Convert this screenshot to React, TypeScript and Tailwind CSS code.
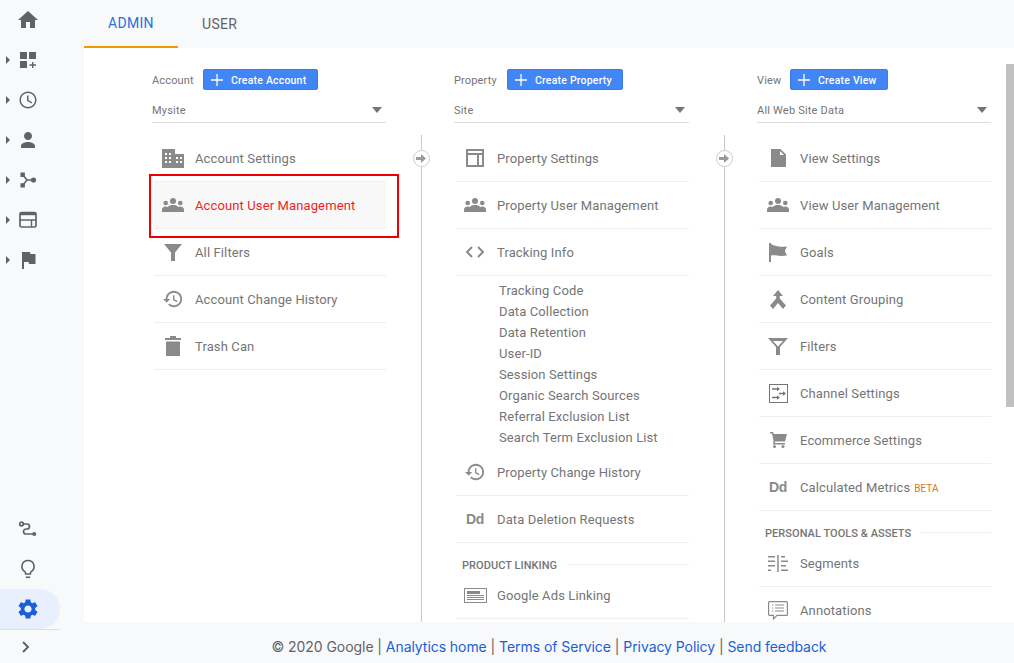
import type { ReactNode } from "react";

type Row = { label: string; icon: ReactNode; beta?: boolean; active?: boolean };

const Home = () => (
  <svg width="24" height="24" viewBox="0 0 24 24" fill="#5f6368"><path d="M10 20v-6h4v6h5v-8h3L12 3 2 12h3v8z" /></svg>
);
const Customization = () => (
  <svg width="24" height="24" viewBox="0 0 24 24" fill="#5f6368">
    <path d="M4 4h7v7H4zM13 4h7v7h-7zM4 13h7v7H4zM16 14h1.400v2.300H20v1.400h-2.600V20H16v-2.300h-2.500v-1.400H16z" />
  </svg>
);
const Clock = () => (
  <svg width="24" height="24" viewBox="0 0 24 24" fill="#5f6368">
    <path d="M11.990 3.500C7.300 3.500 3.500 7.300 3.500 12s3.800 8.500 8.490 8.500c4.700 0 8.510-3.800 8.510-8.500s-3.810-8.500-8.510-8.500zM12 19c-3.870 0-7-3.130-7-7s3.130-7 7-7 7 3.130 7 7-3.130 7-7 7z" />
    <path d="M12.500 7.500H11v5.300l4.600 2.800.75-1.200-3.850-2.300z" />
  </svg>
);
const Person = () => (
  <svg width="24" height="24" viewBox="0 0 24 24" fill="#5f6368">
    <path d="M12 12c2.210 0 4-1.790 4-4s-1.790-4-4-4-4 1.790-4 4 1.790 4 4 4zm0 2c-2.670 0-7 1.340-7 4v2h14v-2c0-2.660-4.330-4-7-4z" />
  </svg>
);
const Acquisition = () => (
  <svg width="24" height="24" viewBox="0 0 24 24" fill="#5f6368">
    <path d="M4.500 4.500h4.400v4.400H4.500zM4.500 15.200h4.400v4.400H4.500z" />
    <circle cx="17.500" cy="12" r="2.600" />
    <path d="M7 7l4 5-4 5M11 12h6" fill="none" stroke="#5f6368" strokeWidth="1.600" />
  </svg>
);
const Behavior = () => (
  <svg width="24" height="24" viewBox="0 0 24 24" fill="none" stroke="#5f6368">
    <rect x="4" y="4.500" width="16" height="14.500" rx="1.500" strokeWidth="1.700" />
    <path d="M4 6h16" strokeWidth="2.400" />
    <path d="M4 12h16M15.500 12v7" strokeWidth="1.400" />
  </svg>
);
const Flag = () => (
  <svg width="24" height="24" viewBox="0 0 24 24" fill="#5f6368"><path d="M14.400 6L14 4H6v17h2v-7h4.600l.4 2h6.500V6z" /></svg>
);
const RouteIcon = () => (
  <svg width="24" height="24" viewBox="0 0 24 24" fill="none" stroke="#5f6368" strokeWidth="1.700">
    <circle cx="5.500" cy="7" r="1.800" />
    <path d="M7.500 7H11a2.500 2.500 0 0 1 0 5h-1a2.500 2.500 0 0 0 0 5h7" />
    <circle cx="18.200" cy="17" r="2" fill="#5f6368" stroke="none" />
  </svg>
);
const Bulb = () => (
  <svg width="24" height="24" viewBox="0 0 24 24" fill="none" stroke="#5f6368" strokeWidth="1.600">
    <path d="M12 3.500a6 6 0 0 0-3.200 11.100c.6.400.8 1 .8 1.700v.7h4.800v-.7c0-.7.200-1.300.8-1.700A6 6 0 0 0 12 3.500z" />
    <path d="M9.800 20.300h4.400" />
  </svg>
);
const Gear = () => (
  <svg width="24" height="24" viewBox="0 0 24 24" fill="#1a5fd9">
    <path d="M19.140 12.940c.04-.3.06-.61.06-.94 0-.32-.02-.64-.07-.94l2.030-1.580c.18-.14.23-.41.12-.61l-1.920-3.320c-.12-.22-.37-.29-.59-.22l-2.390.96c-.5-.38-1.030-.7-1.620-.94l-.36-2.540c-.04-.24-.24-.41-.48-.41h-3.840c-.24 0-.43.17-.47.41l-.36 2.540c-.59.24-1.130.57-1.620.94l-2.390-.96c-.22-.08-.47 0-.59.22L2.740 8.870c-.12.21-.08.47.12.61l2.030 1.580c-.05.3-.09.63-.09.94s.02.64.07.94l-2.030 1.580c-.18.14-.23.41-.12.61l1.920 3.320c.12.22.37.29.59.22l2.390-.96c.5.38 1.030.7 1.620.94l.36 2.540c.05.24.24.41.48.41h3.840c.24 0 .44-.17.47-.41l.36-2.540c.59-.24 1.130-.56 1.620-.94l2.390.96c.22.08.47 0 .59-.22l1.920-3.320c.12-.22.07-.47-.12-.61l-2.010-1.580zM12 15.600c-1.980 0-3.600-1.620-3.600-3.600s1.620-3.600 3.600-3.600 3.600 1.620 3.600 3.600-1.620 3.600-3.600 3.600z" />
  </svg>
);

const Building = () => (
  <svg width="22" height="19" viewBox="0 0 22 19">
    <path fill="#8a8a8a" fillRule="evenodd" d="M0 0h13v5h9v14H0zM3 4v2h2V4zm4 0v2h2V4zM3 8v2h2V8zm4 0v2h2V8zm7 0v2h2V8zm4 0v2h2V8zM3 12v2h2v-2zm4 0v2h2v-2zm7 0v2h2v-2zm4 0v2h2v-2z" />
  </svg>
);
const People = () => (
  <svg width="22" height="14" viewBox="0 0 22 14" fill="#8a8a8a">
    <circle cx="11" cy="3" r="3" />
    <circle cx="3.700" cy="5" r="2.300" />
    <circle cx="18.300" cy="5" r="2.300" />
    <path d="M0 14v-2.500c0-1.700 2-3 3.700-3 .8 0 1.500.2 2.100.5C7 7.500 9 7 11 7s4 .5 5.200 2c.6-.3 1.300-.5 2.100-.5 1.700 0 3.700 1.300 3.700 3V14z" />
  </svg>
);
const Funnel = () => (
  <svg width="18" height="17" viewBox="0 0 18 17" fill="#8a8a8a"><path d="M0 0h18l-7 8.500V17H7V8.500z" /></svg>
);
const FunnelOutline = () => (
  <svg width="20" height="17" viewBox="0 0 20 17" fill="#8a8a8a">
    <path fillRule="evenodd" d="M0 0h20l-8 9v8H8V9zM5 3l5 5.500L15 3z" />
  </svg>
);
const History = () => (
  <svg width="20" height="20" viewBox="1 2 22 20" fill="#8a8a8a">
    <path d="M13 3c-4.970 0-9 4.030-9 9H1l3.890 3.890.07.14L9 12H6c0-3.870 3.130-7 7-7s7 3.130 7 7-3.130 7-7 7c-1.930 0-3.680-.79-4.940-2.060l-1.420 1.420C8.270 19.990 10.510 21 13 21c4.970 0 9-4.030 9-9s-4.030-9-9-9zm-1 5v5l4.280 2.540.72-1.210-3.500-2.080V8H12z" />
  </svg>
);
const Trash = () => (
  <svg width="16" height="20" viewBox="0 0 16 20" fill="#8a8a8a"><path d="M0 2h5V0h6v2h5v2H0zM1 5.500h14V20H1z" /></svg>
);
const Dd = () => (
  <span className="font-['Liberation_Sans',sans-serif] text-[14px] leading-none font-bold tracking-[-0.3px] text-[#8a8a8a]">Dd</span>
);
const Layout = () => (
  <svg width="18" height="18" viewBox="0 0 18 18" fill="none" stroke="#8a8a8a" strokeWidth="2">
    <path d="M1 1h16v16H1zM1 5h16M12 5v12" />
  </svg>
);
const Code = () => (
  <svg width="20" height="12" viewBox="0 0 20 12" fill="none" stroke="#8a8a8a" strokeWidth="2">
    <path d="M7 1L2 6l5 5M13 1l5 5-5 5" />
  </svg>
);
const AdsCard = () => (
  <svg width="23" height="15" viewBox="0 0 23 15" fill="none">
    <rect x=".5" y=".5" width="22" height="14" stroke="#8a8a8a" />
    <path d="M3 3h13v3H3z" fill="#8a8a8a" />
    <path d="M3 7.500h17M3 9.500h17M3 11.500h17" stroke="#8a8a8a" />
  </svg>
);
const Doc = () => (
  <svg width="15" height="18" viewBox="0 0 15 18" fill="#8a8a8a"><path d="M0 0h9.500L15 5.500V18H0zM9 2v4h4z" fillRule="evenodd" /></svg>
);
const GoalFlag = () => (
  <svg width="18" height="19" viewBox="0 0 18 19" fill="#8a8a8a">
    <path d="M0 0h2v19H0zM2 1c3 2 6 2 8 2.500 2 .5 5 .3 8 0-1 2-2 3.500-2 4.500s1 2.500 2 4.500c-4 .5-8 .5-10 0-2-.5-4-.5-6 0z" />
  </svg>
);
const Merge = () => (
  <svg width="16" height="19" viewBox="0 0 16 19" fill="#8a8a8a">
    <path d="M8 0l5 6H9.800v2.500L16 15.500 13 19 8 13 3 19 0 15.500 6.200 8.500V6H3z" />
  </svg>
);
const ChannelBox = () => (
  <svg width="19" height="19" viewBox="0 0 19 19" fill="none" stroke="#757575">
    <rect x=".5" y=".5" width="18" height="18" />
    <path d="M3 5h6M10 9.500h6M3 13.500h6" strokeWidth="1.400" />
    <path d="M8 2.800L11 5 8 7.200zM14 7.300l3 2.200-3 2.200zM8 11.300l3 2.200-3 2.200z" fill="#757575" stroke="none" />
  </svg>
);
const Cart = () => (
  <svg width="17" height="16" viewBox="0 0 17 16" fill="#8a8a8a">
    <path d="M0 0h3l.8 2H17l-2 7.500H5.200L4.800 11H15v1.500H3L3.600 9 2 1.500H0z" />
    <circle cx="4.500" cy="14.500" r="1.500" />
    <circle cx="13" cy="14.500" r="1.500" />
  </svg>
);
const SegmentsIcon = () => (
  <svg width="20" height="17" viewBox="0 0 20 17" fill="none" stroke="#8a8a8a" strokeWidth="1.500">
    <path d="M10 0v17M0 1.800h7M0 6.300h7M0 10.800h7M0 15.300h3M13 1.800h4M13 6.300h7M13 10.800h5M13 15.300h7" />
  </svg>
);
const Comment = () => (
  <svg width="20" height="19" viewBox="0 0 20 19" fill="none" stroke="#8a8a8a" strokeWidth="1.200">
    <path d="M1.500.6h17a.9.9 0 0 1 .9.9v12a.9.9 0 0 1-.9.9H9L5.500 18v-3.600h-4a.9.9 0 0 1-.9-.9v-12a.9.9 0 0 1 .9-.9z" />
    <path d="M4 4h1.300M7 4h9M4 7h1.300M7 7h9M4 10h1.300M7 10h9" />
  </svg>
);

const accountRows: Row[] = [
  { label: "Account Settings", icon: <Building /> },
  { label: "Account User Management", icon: <People />, active: true },
  { label: "All Filters", icon: <Funnel /> },
  { label: "Account Change History", icon: <History /> },
  { label: "Trash Can", icon: <Trash /> },
];

const propertyTop: Row[] = [
  { label: "Property Settings", icon: <Layout /> },
  { label: "Property User Management", icon: <People /> },
  { label: "Tracking Info", icon: <Code /> },
];

const trackingLinks = [
  "Tracking Code",
  "Data Collection",
  "Data Retention",
  "User-ID",
  "Session Settings",
  "Organic Search Sources",
  "Referral Exclusion List",
  "Search Term Exclusion List",
];

const propertyMiddle: Row[] = [
  { label: "Property Change History", icon: <History /> },
  { label: "Data Deletion Requests", icon: <Dd /> },
];

const viewTop: Row[] = [
  { label: "View Settings", icon: <Doc /> },
  { label: "View User Management", icon: <People /> },
  { label: "Goals", icon: <GoalFlag /> },
  { label: "Content Grouping", icon: <Merge /> },
  { label: "Filters", icon: <FunnelOutline /> },
  { label: "Channel Settings", icon: <ChannelBox /> },
  { label: "Ecommerce Settings", icon: <Cart /> },
  { label: "Calculated Metrics", icon: <Dd />, beta: true },
];

const viewBottom: Row[] = [
  { label: "Segments", icon: <SegmentsIcon /> },
  { label: "Annotations", icon: <Comment /> },
];

function ListRow({ row }: { row: Row }) {
  return (
    <div
      className={`relative flex h-[47px] shrink-0 items-center border-b border-[#eeeeee] text-[13px] tracking-[0.12px] ${
        row.active ? "bg-[#f8f8f8] text-[#f01f1f]" : "text-[#757575]"
      }`}
    >
      <span className="flex w-[38px] shrink-0 justify-center">{row.icon}</span>
      <span className="ml-[3px] pt-[2px]">{row.label}</span>
      {row.beta && <span className="ml-1 pt-[2px] text-[10px] tracking-normal text-[#e8711a]">BETA</span>}
      {row.active && (
        <span className="absolute top-[-8px] right-[-13px] bottom-[-10px] left-[-5px] border-2 border-[#ee0000]" />
      )}
    </div>
  );
}

function Section({ title }: { title: string }) {
  return (
    <div className="flex h-[29px] shrink-0 items-start pt-[17px] pl-[6px]">
      <span className="text-[11px] leading-3 font-medium tracking-[0.05px] whitespace-nowrap text-[#757575]">{title}</span>
      <span className="mt-[4px] ml-[10px] h-px flex-1 bg-[#eeeeee]" />
    </div>
  );
}

function ColumnHead({
  label,
  labelWidth,
  button,
  value,
}: {
  label: string;
  labelWidth: string;
  button: string;
  value: string;
}) {
  return (
    <div className="shrink-0">
      <div className="flex h-[21px] items-center">
        <span className={`${labelWidth} pt-[4px] text-[11px] tracking-[0.15px] text-[#757575]`}>{label}</span>
        <button className="ml-[10px] flex h-[21px] items-center rounded-[2px] border border-[#3f7ce8] bg-[#4285f4] pr-[10.500px] pl-[6px] text-[10.500px] font-medium tracking-[0.2px] text-white">
          <svg width="14" height="14" viewBox="0 0 14 14" stroke="#ffffff" strokeWidth="1.300" className="mr-[7px]">
            <path d="M7 1v12M1 7h12" />
          </svg>
          <span className="pt-[2px]">{button}</span>
        </button>
      </div>
      <div className="mt-2 flex h-[25px] items-center justify-between border-b border-[#dddddd] text-[11px] tracking-[0.2px] text-[#757575]">
        <span className="pt-[2px]">{value}</span>
        <span className="mr-[4px] h-0 w-0 border-x-[5px] border-t-[6px] border-x-transparent border-t-[#757575]" />
      </div>
    </div>
  );
}

function Rail() {
  return (
    <div className="relative mt-[87px] ml-[35px] w-[33px] shrink-0">
      <div className="h-full w-px bg-[#c8c8c8]" />
      <span className="absolute top-[15px] left-[-8px] flex h-[17px] w-[17px] items-center justify-center rounded-full border border-[#cccccc] bg-white">
        <svg width="11" height="9" viewBox="0 0 11 9" fill="#9a9a9a">
          <path d="M0 3h5V0l5 4.500L5 9V6H0z" />
        </svg>
      </span>
    </div>
  );
}

function SideItem({ children, caret }: { children: ReactNode; caret?: boolean }) {
  return (
    <div className="relative flex h-10 w-[44px] items-center justify-center pl-[12px]">
      {caret && (
        <span className="absolute top-1/2 left-[6px] h-0 w-0 -translate-y-1/2 border-y-[4px] border-l-[4px] border-y-transparent border-l-[#5f6368]" />
      )}
      {children}
    </div>
  );
}

export default function App() {
  return (
    <div className="flex h-[663px] w-[1014px] overflow-hidden bg-[#f8f9fa] font-['Roboto',sans-serif]">
      <aside className="flex w-[84px] shrink-0 flex-col">
        <SideItem><Home /></SideItem>
        <SideItem caret><Customization /></SideItem>
        <SideItem caret><Clock /></SideItem>
        <SideItem caret><Person /></SideItem>
        <SideItem caret><Acquisition /></SideItem>
        <SideItem caret><Behavior /></SideItem>
        <SideItem caret><Flag /></SideItem>
        <div className="flex-1" />
        <SideItem><RouteIcon /></SideItem>
        <SideItem><Bulb /></SideItem>
        <div className="w-[60px] rounded-r-[20px] bg-[#e8f0fe]">
          <SideItem><Gear /></SideItem>
        </div>
        <div className="flex h-[34px] w-[60px] items-center justify-center border-t border-[#e0e0e0] pr-[8px]">
          <svg width="10" height="14" viewBox="0 0 10 14" fill="none" stroke="#5f6368" strokeWidth="2">
            <path d="M2 2l5 5-5 5" />
          </svg>
        </div>
      </aside>

      <div className="flex min-w-0 flex-1 flex-col">
        <nav className="flex h-12 shrink-0 text-[14px] tracking-[0.3px]">
          <div className="flex h-12 w-[94px] items-center border-b-2 border-[#f29900] pl-6 text-[#2a6fe0]">ADMIN</div>
          <div className="flex h-12 items-center px-6 text-[#5f6368]">USER</div>
        </nav>

        <main className="relative flex min-h-0 flex-1 overflow-hidden bg-white pl-[68px]">
          <section className="flex w-[234px] shrink-0 flex-col pt-[21px]">
            <ColumnHead label="Account" labelWidth="w-[41px]" button="Create Account" value="Mysite" />
            <div className="mt-3 ml-[2px] flex flex-col">
              {accountRows.map((r) => <ListRow key={r.label} row={r} />)}
            </div>
          </section>

          <Rail />

          <section className="flex w-[235px] shrink-0 flex-col pt-[21px]">
            <ColumnHead label="Property" labelWidth="w-[43px]" button="Create Property" value="Site" />
            <div className="mt-3 ml-[2px] flex flex-col">
              {propertyTop.map((r) => <ListRow key={r.label} row={r} />)}
              <div className="flex flex-col pt-1 pb-px pl-[43px]">
                {trackingLinks.map((t) => (
                  <div key={t} className="flex h-[21px] items-center text-[13px] tracking-[0.12px] text-[#757575]">{t}</div>
                ))}
              </div>
              {propertyMiddle.map((r) => <ListRow key={r.label} row={r} />)}
              <Section title="PRODUCT LINKING" />
              <ListRow row={{ label: "Google Ads Linking", icon: <AdsCard /> }} />
            </div>
          </section>

          <Rail />

          <section className="flex w-[234px] shrink-0 flex-col pt-[21px]">
            <ColumnHead label="View" labelWidth="w-[23px]" button="Create View" value="All Web Site Data" />
            <div className="mt-3 ml-[2px] flex flex-col">
              {viewTop.map((r) => <ListRow key={r.label} row={r} />)}
              <Section title="PERSONAL TOOLS & ASSETS" />
              {viewBottom.map((r) => <ListRow key={r.label} row={r} />)}
            </div>
          </section>

          <div className="absolute top-4 right-0 h-[343px] w-2 bg-[#c1c1c1]" />
        </main>

        <footer className="flex h-[41px] shrink-0 items-center justify-center pt-2 font-['Inter',sans-serif] text-[14px] tracking-[-0.06px] text-[#5f6368]">
          <span>© 2020 Google |&nbsp;</span>
          <a className="text-[#1a5fd9]">Analytics home</a>
          <span>&nbsp;|&nbsp;</span>
          <a className="text-[#1a5fd9]">Terms of Service</a>
          <span>&nbsp;|&nbsp;</span>
          <a className="text-[#1a5fd9]">Privacy Policy</a>
          <span>&nbsp;|&nbsp;</span>
          <a className="text-[#1a5fd9]">Send feedback</a>
        </footer>
      </div>
    </div>
  );
}
